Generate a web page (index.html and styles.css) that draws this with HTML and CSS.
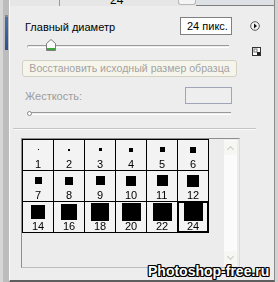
FILE: index.html
```html
<!DOCTYPE html>
<html lang="ru">
<head>
  <meta charset="UTF-8" />
  <title>Кисти</title>
  <link rel="stylesheet" href="styles.css">
</head>
<body>
  <div class="side"><div class="side-tab"></div></div>

  <div class="panel">
    <div class="top">
      <div class="top-cell first"></div>
      <div class="top-cell num">24</div>
      <div class="top-box"></div>
      <div class="top-line"></div>
    </div>

    <div class="content">
      <div class="row row-main">
        <span class="label">Главный диаметр</span>
        <div class="field">24 пикс.</div>
        <svg class="menu-btn" width="10" height="10" viewBox="0 0 10 10">
          <circle cx="5" cy="5" r="4.3" fill="#f4f4f4" stroke="#555" stroke-width="1"/>
          <path d="M4 2.6 L7 5 L4 7.4 Z" fill="#111"/>
        </svg>
      </div>

      <div class="row row-slider">
        <div class="slider">
          <svg class="thumb" width="10" height="12" viewBox="0 0 10 12">
            <path d="M0.5 4.5 L5 0.5 L9.5 4.5 L9.5 11.5 L0.5 11.5 Z" fill="#fbfbfb" stroke="#7d7d7d"/>
            <rect x="1" y="9" width="8" height="2" fill="#3fa63f"/>
          </svg>
        </div>
        <svg class="new-btn" width="9" height="9" viewBox="0 0 9 9">
          <rect x="0.5" y="0.5" width="8" height="8" fill="#fff" stroke="#333"/>
          <rect x="2" y="2" width="3" height="3" fill="none" stroke="#777"/>
          <rect x="5" y="5" width="3" height="3" fill="#222"/>
        </svg>
      </div>

      <div class="reset">Восстановить исходный размер образца</div>

      <div class="row row-hard">
        <span class="label muted">Жесткость:</span>
        <div class="field off"></div>
      </div>

      <div class="slider small">
        <span class="knob"></span>
      </div>
    </div>

    <div class="sep"></div>

    <div class="list">
      <div class="grid" id="grid"></div>
      <div class="scroll">
        <div class="arrow up"></div>
        <div class="arrow down"></div>
      </div>
    </div>

    <div class="mark">Photoshop-free.ru</div>
  </div>

  <script>
    const sizes = [1, 2, 3, 4, 5, 6, 7, 8, 9, 10, 11, 12, 14, 16, 18, 20, 22, 24];
    const grid = document.getElementById("grid");

    sizes.forEach(s => {
      const cell = document.createElement("div");
      cell.className = "cell" + (s === 24 ? " picked" : "");
      cell.innerHTML =
        '<div class="thumb-area"><span class="dot" style="width:' + Math.min(s, 19) + 'px;height:' + Math.min(s, 18) + 'px"></span></div>' +
        '<div class="size">' + s + '</div>';
      grid.appendChild(cell);
    });
  </script>
</body>
</html>
```

FILE: styles.css
```css
body {
  margin: 0;
  width: 278px;
  height: 282px;
  overflow: hidden;
  display: flex;
  font-family: 'Liberation Sans', Arial, sans-serif;
  font-size: 11px;
  color: #000;
  background: #d2d2d2;
}
.side {
  width: 6px;
  border-left: 3px solid #d6d6d6;
  background: #bcbcbc;
}
.side-tab {
  margin: 15px 0 0 2px;
  width: 3px;
  height: 33px;
  background: linear-gradient(#4d6ea8, #2c4f94);
  border-top: 2px solid #8a8a8a;
}
.panel {
  position: relative;
  width: 264px;
  height: 280px;
  background: #ededed;
  border-left: 1px solid #fafafa;
  border-right: 1px solid #8c8c8c;
  border-bottom: 2px solid #5e5e5e;
}
.top {
  height: 6px;
  display: flex;
  overflow: hidden;
  background: #e6e6e6;
}
.top-cell {
  height: 6px;
}
.top-cell.first {
  width: 49px;
  border-right: 1px solid #9a9a9a;
}
.top-cell.num {
  width: 68px;
  margin-top: -6px;
  padding-left: 50px;
  font-size: 12px;
  line-height: 12px;
}
.top-box {
  width: 16px;
  height: 4px;
  border: 1px solid #b8b8b8;
  border-top: none;
  border-radius: 0 0 3px 3px;
  background: #f4f4f4;
}
.top-line {
  flex: 1;
  height: 5px;
  border-bottom: 1px solid #7e7e7e;
  background: #dde1e6;
}
.content {
  padding-left: 15px;
  width: 207px;
}
.row {
  display: flex;
  align-items: center;
}
.row-main {
  margin-top: 11px;
  height: 18px;
  position: relative;
}
.label {
  flex: 1;
  padding-top: 1px;
}
.label.muted {
  color: #9c9c9c;
}
.field {
  width: 44px;
  height: 16px;
  padding-left: 6px;
  border: 1px solid #7f7f7f;
  background: #fff;
  line-height: 16px;
}
.field.off {
  width: 45px;
  height: 15px;
  padding: 0;
  border-color: #9ea6b8;
  background: #eeeeee;
}
.menu-btn {
  position: absolute;
  left: 225px;
  top: 4px;
}
.row-slider {
  margin-top: 4px;
  height: 12px;
  position: relative;
}
.slider {
  position: relative;
  width: 202px;
  height: 12px;
  margin-left: 2px;
}
.slider::before {
  content: "";
  position: absolute;
  left: 0;
  right: 0;
  top: 6px;
  height: 1px;
  border-top: 1px solid #9a9a9a;
  border-bottom: 1px solid #ffffff;
  border-left: 1px solid #b0b0b0;
  border-radius: 2px 0 0 2px;
}
.thumb {
  position: absolute;
  left: 19px;
  top: 0;
}
.new-btn {
  position: absolute;
  left: 227px;
  top: 8px;
}
.reset {
  margin: 9px 0 0 -3px;
  width: 213px;
  height: 15px;
  border: 1px solid #d2d1c4;
  border-radius: 3px;
  background: #f6f5ec;
  color: #a3a3a3;
  text-align: center;
  white-space: nowrap;
  line-height: 15px;
  font-size: 10.6px;
}
.row-hard {
  margin-top: 10px;
  height: 17px;
}
.slider.small {
  margin-top: 4px;
  width: 204px;
  height: 10px;
}
.slider.small::before {
  top: 4px;
}
.knob {
  position: absolute;
  left: 0;
  top: 3px;
  width: 3px;
  height: 3px;
  border: 1px solid #8a8a8a;
  border-radius: 50%;
  background: #fff;
}
.sep {
  margin: 10px 0 0 3px;
  width: 243px;
  height: 0;
  border-top: 1px solid #c4c4c4;
  border-bottom: 1px solid #fbfbfb;
}
.list {
  margin: 8px 0 0 11px;
  width: 217px;
  height: 128px;
  display: flex;
  border: 1px solid #8e8e8e;
  border-right-color: #dcdcdc;
  border-bottom-color: #bdbdbd;
  background: #ececec;
}
.grid {
  align-self: flex-start;
  display: grid;
  grid-template-columns: repeat(6, 31px);
  grid-auto-rows: 31px;
  border-left: 1px solid #000;
  border-top: 1px solid #000;
}
.cell {
  border-right: 1px solid #000;
  border-bottom: 1px solid #000;
  background: #f3f3f3;
  display: flex;
  flex-direction: column;
  align-items: center;
}
.cell.picked {
  box-shadow: inset 0 0 0 1px #000;
}
.thumb-area {
  height: 20px;
  display: flex;
  align-items: center;
  justify-content: center;
}
.dot {
  display: block;
  background: #000;
}
.size {
  height: 11px;
  line-height: 10px;
  font-size: 11px;
  color: #000;
  -webkit-font-smoothing: antialiased;
  will-change: transform;
}
.scroll {
  margin-left: auto;
  margin-right: 1px;
  width: 13px;
  border: 1px solid #ececec;
  background: #fbfbfb;
  display: flex;
  flex-direction: column;
  justify-content: space-between;
  padding: 1px 0;
}
.arrow {
  height: 14px;
  background: #f6f6f2;
  border-radius: 2px;
  position: relative;
}
.arrow::after {
  content: "";
  position: absolute;
  left: 4px;
  width: 4px;
  height: 4px;
  border-left: 1px solid #c9c9c9;
  border-top: 1px solid #c9c9c9;
}
.arrow.up::after {
  top: 6px;
  transform: rotate(45deg);
}
.arrow.down::after {
  top: 3px;
  transform: rotate(225deg);
}
.mark {
  position: absolute;
  left: 138px;
  top: 263px;
  font-weight: bold;
  font-size: 14px;
  color: #fff;
  text-shadow: 1px 0 #000, -1px 0 #000, 0 1px #000, 0 -1px #000,
    1px 1px #000, -1px -1px #000, 1px -1px #000, -1px 1px #000;
}
```
